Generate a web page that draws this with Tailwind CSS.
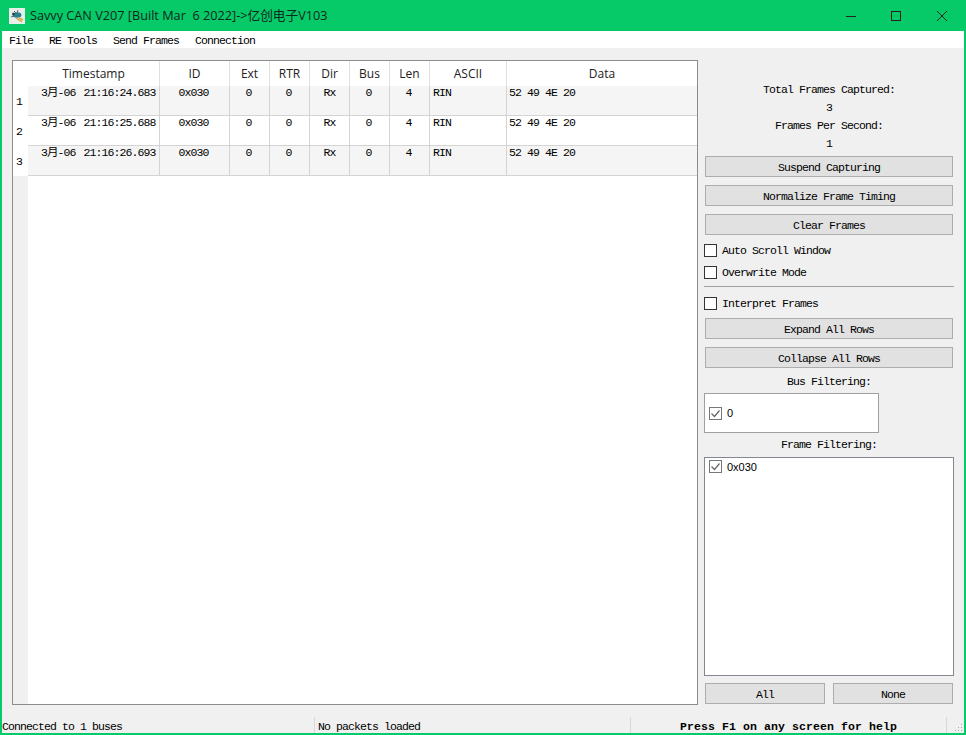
<!DOCTYPE html>
<html lang="en">
<head>
    <meta charset="UTF-8">
    <title>Savvy CAN</title>
    <script src="https://cdn.jsdelivr.net/npm/@tailwindcss/browser@4"></script>
</head>
<body class="bg-[#f0f0f0]">
<div class="w-[966px] h-[735px] flex flex-col border-x-2 border-b-2 border-[#06c968] overflow-hidden text-black font-['Liberation_Mono','Noto_Sans_CJK_SC',monospace] text-[11.5px] tracking-[-0.9px] bg-[#f0f0f0]">

    <!-- title bar -->
    <div class="h-[31px] -mx-[2px] bg-[#06c968] flex items-center shrink-0">
        <svg class="ml-[9px] w-4 h-4" viewBox="0 0 16 16">
            <rect width="16" height="16" fill="#e8eeea"/>
            <path d="M3 5l3 2M2 9l3-1M5 3l2 2M9 2l-1 3" stroke="#666" stroke-width="1"/>
            <ellipse cx="8" cy="7" rx="4.5" ry="2.8" fill="#2a7f8f"/>
            <path d="M7 10l6 4M10 10l4 2" stroke="#d9a441" stroke-width="1.4"/>
            <circle cx="4.5" cy="6" r="1.2" fill="#333"/>
        </svg>
        <span class="ml-[5px] font-['Open_Sans','Noto_Sans_CJK_SC',sans-serif] text-[12.7px] tracking-normal text-[#10281c] whitespace-pre">Savvy CAN V207 [Built Mar  6 2022]-&gt;亿创电子V103</span>
        <div class="ml-auto flex items-center">
            <svg class="w-[10px] h-[10px] mr-[35px]" viewBox="0 0 10 10"><path d="M0 5.5h10" stroke="#222" stroke-width="1"/></svg>
            <svg class="w-[10px] h-[10px] mr-[36px]" viewBox="0 0 10 10"><rect x="0.5" y="0.5" width="9" height="9" fill="none" stroke="#222"/></svg>
            <svg class="w-[10px] h-[10px] mr-[19px]" viewBox="0 0 10 10"><path d="M0 0l10 10M10 0L0 10" stroke="#222" stroke-width="1"/></svg>
        </div>
    </div>

    <!-- menu -->
    <div class="h-[17px] -mx-[2px] bg-white flex items-center pl-[9px] pt-[3px] gap-[16px] shrink-0">
        <span>File</span><span>RE Tools</span><span>Send Frames</span><span>Connection</span>
    </div>

    <!-- main -->
    <div class="flex-1 flex pl-[10px] pt-[12px] min-h-0">

        <!-- frame table -->
        <div class="w-[686px] h-[645px] border border-[#8c8c8c] bg-white flex shrink-0">
            <div class="w-[15px] flex flex-col bg-[#f0f0f0] shrink-0">
                <div class="h-[25px] bg-white"></div>
                <div class="h-[30px] bg-white pl-[3px] pt-[2px] flex items-center">1</div>
                <div class="h-[30px] bg-white pl-[3px] pt-[2px] flex items-center">2</div>
                <div class="h-[30px] bg-white pl-[3px] pt-[2px] flex items-center">3</div>
            </div>
            <div class="flex-1 grid grid-cols-[132px_70px_40px_40px_40px_40px_40px_77px_190px] content-start [grid-template-rows:25px_30px_30px_30px]">
                <div class="col-span-9 grid grid-cols-subgrid font-['Open_Sans',sans-serif] text-[12px] tracking-normal text-center text-[#222] leading-[25px]">
                    <div class="border-r border-[#e0e0e0]">Timestamp</div>
                    <div class="border-r border-[#e0e0e0]">ID</div>
                    <div class="border-r border-[#e0e0e0]">Ext</div>
                    <div class="border-r border-[#e0e0e0]">RTR</div>
                    <div class="border-r border-[#e0e0e0]">Dir</div>
                    <div class="border-r border-[#e0e0e0]">Bus</div>
                    <div class="border-r border-[#e0e0e0]">Len</div>
                    <div class="border-r border-[#e0e0e0]">ASCII</div>
                    <div>Data</div>
                </div>

                <div class="col-span-9 grid grid-cols-subgrid bg-[#f5f5f5] border-b border-[#d4d4d4] text-center leading-[14px]">
                    <div class="border-r border-[#d4d4d4] pl-[13px] text-left"><span class="mr-[2px]">3月-06</span> 21:16:24.683</div>
                    <div class="border-r border-[#d4d4d4] pr-[2px]">0x030</div>
                    <div class="border-r border-[#d4d4d4] pr-[2px]">0</div>
                    <div class="border-r border-[#d4d4d4] pr-[2px]">0</div>
                    <div class="border-r border-[#d4d4d4]">Rx</div>
                    <div class="border-r border-[#d4d4d4] pr-[2px]">0</div>
                    <div class="border-r border-[#d4d4d4] pr-[2px]">4</div>
                    <div class="border-r border-[#d4d4d4] pl-[3px] text-left">RIN</div>
                    <div class="pl-[2px] text-left">52 49 4E 20</div>
                </div>
                <div class="col-span-9 grid grid-cols-subgrid bg-white border-b border-[#d4d4d4] text-center leading-[14px]">
                    <div class="border-r border-[#d4d4d4] pl-[13px] text-left"><span class="mr-[2px]">3月-06</span> 21:16:25.688</div>
                    <div class="border-r border-[#d4d4d4] pr-[2px]">0x030</div>
                    <div class="border-r border-[#d4d4d4] pr-[2px]">0</div>
                    <div class="border-r border-[#d4d4d4] pr-[2px]">0</div>
                    <div class="border-r border-[#d4d4d4]">Rx</div>
                    <div class="border-r border-[#d4d4d4] pr-[2px]">0</div>
                    <div class="border-r border-[#d4d4d4] pr-[2px]">4</div>
                    <div class="border-r border-[#d4d4d4] pl-[3px] text-left">RIN</div>
                    <div class="pl-[2px] text-left">52 49 4E 20</div>
                </div>
                <div class="col-span-9 grid grid-cols-subgrid bg-[#f5f5f5] border-b border-[#d4d4d4] text-center leading-[14px]">
                    <div class="border-r border-[#d4d4d4] pl-[13px] text-left"><span class="mr-[2px]">3月-06</span> 21:16:26.693</div>
                    <div class="border-r border-[#d4d4d4] pr-[2px]">0x030</div>
                    <div class="border-r border-[#d4d4d4] pr-[2px]">0</div>
                    <div class="border-r border-[#d4d4d4] pr-[2px]">0</div>
                    <div class="border-r border-[#d4d4d4]">Rx</div>
                    <div class="border-r border-[#d4d4d4] pr-[2px]">0</div>
                    <div class="border-r border-[#d4d4d4] pr-[2px]">4</div>
                    <div class="border-r border-[#d4d4d4] pl-[3px] text-left">RIN</div>
                    <div class="pl-[2px] text-left">52 49 4E 20</div>
                </div>
            </div>
        </div>

        <!-- side panel -->
        <div class="ml-[6px] w-[250px] flex flex-col shrink-0">
            <div class="mt-[21px] text-center leading-[18px]">
                <div>Total Frames Captured:</div>
                <div>3</div>
                <div>Frames Per Second:</div>
                <div>1</div>
            </div>
            <div class="mt-[3px] ml-[1px] w-[248px] flex flex-col gap-[8px]">
                <button class="h-[21px] pt-[2px] bg-[#e1e1e1] border border-[#adadad]">Suspend Capturing</button>
                <button class="h-[21px] pt-[2px] bg-[#e1e1e1] border border-[#adadad]">Normalize Frame Timing</button>
                <button class="h-[21px] pt-[2px] bg-[#e1e1e1] border border-[#adadad]">Clear Frames</button>
            </div>
            <label class="mt-[9px] h-[12px] flex items-center gap-[5px]"><span class="w-[13px] h-[13px] bg-white border border-[#333]"></span><span class="pt-[1px]">Auto Scroll Window</span></label>
            <label class="mt-[10px] h-[12px] flex items-center gap-[5px]"><span class="w-[13px] h-[13px] bg-white border border-[#333]"></span><span class="pt-[1px]">Overwrite Mode</span></label>
            <div class="mt-[8px] h-px w-[250px] bg-[#a0a0a0]"></div>
            <label class="mt-[10px] h-[12px] flex items-center gap-[5px]"><span class="w-[13px] h-[13px] bg-white border border-[#333]"></span><span class="pt-[1px]">Interpret Frames</span></label>
            <div class="mt-[9px] ml-[1px] w-[248px] flex flex-col gap-[8px]">
                <button class="h-[21px] pt-[2px] bg-[#e1e1e1] border border-[#adadad]">Expand All Rows</button>
                <button class="h-[21px] pt-[2px] bg-[#e1e1e1] border border-[#adadad]">Collapse All Rows</button>
            </div>
            <div class="mt-[7px] text-center leading-[14px]">Bus Filtering:</div>
            <div class="mt-[4px] w-[175px] h-[40px] bg-white border border-[#a0a0a0] flex items-center pl-[4px] gap-[5px] font-['Liberation_Sans',sans-serif] text-[11px] tracking-normal">
                <svg class="w-[13px] h-[13px]" viewBox="0 0 13 13"><rect x="0.5" y="0.5" width="12" height="12" fill="#fff" stroke="#777"/><path d="M2.5 6.5l3 3 5-6" fill="none" stroke="#666" stroke-width="1.2"/></svg>
                <span>0</span>
            </div>
            <div class="mt-[5px] text-center leading-[14px]">Frame Filtering:</div>
            <div class="mt-[5px] w-[250px] h-[219px] bg-white border border-[#828790] flex items-start pl-[4px] pt-[1px] gap-[5px]">
                <svg class="w-[13px] h-[13px] mt-[1px]" viewBox="0 0 13 13"><rect x="0.5" y="0.5" width="12" height="12" fill="#fff" stroke="#777"/><path d="M2.5 6.5l3 3 5-6" fill="none" stroke="#666" stroke-width="1.2"/></svg>
                <span class="font-['Liberation_Sans',sans-serif] text-[11px] tracking-normal leading-[14px] mt-[1px]">0x030</span>
            </div>
            <div class="mt-[7px] ml-[1px] w-[248px] flex gap-[8px]">
                <button class="flex-1 h-[21px] pt-[2px] bg-[#e1e1e1] border border-[#adadad]">All</button>
                <button class="flex-1 h-[21px] pt-[2px] bg-[#e1e1e1] border border-[#adadad]">None</button>
            </div>
        </div>
    </div>

    <!-- status bar -->
    <div class="h-[16px] flex items-center shrink-0 relative">
        <div class="w-[313px] h-full flex items-center pt-[3px] border-r border-[#d8d8d8]">Connected to 1 buses</div>
        <div class="w-[316px] h-full flex items-center pl-[3px] pt-[3px] border-r border-[#d8d8d8]">No packets loaded</div>
        <div class="w-[316px] h-full flex items-center justify-center pt-[3px] font-bold tracking-[0.1px] border-r border-[#d8d8d8]">Press F1 on any screen for help</div>
        <svg class="absolute right-[1px] bottom-0 w-[10px] h-[10px]" viewBox="0 0 10 10"><path d="M8 1h1v1H8zM5 4h1v1H5zM8 4h1v1H8zM2 7h1v1H2zM5 7h1v1H5zM8 7h1v1H8z" fill="#a8a8a8"/></svg>
    </div>
</div>
</body>
</html>
